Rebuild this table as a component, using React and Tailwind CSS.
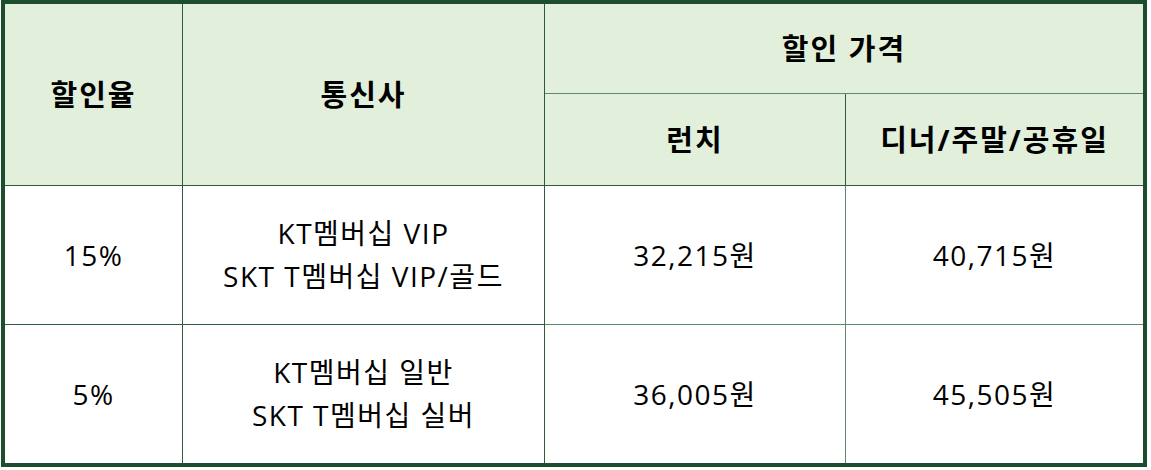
export default function App() {
  const head = "flex items-center justify-center bg-[#e2efda] font-bold text-[29px] tracking-[2px] text-black";
  const cell = "flex flex-col items-center justify-center bg-white text-[28px] leading-[43px] tracking-[1.5px] text-black";

  return (
    <div className="bg-white h-[470px] w-[1151px] pt-0">
      <div
        className="ml-px w-[1146px] border-4 border-[#1b4d2e]"
        style={{ fontFamily: '"Open Sans", "Noto Sans CJK KR", sans-serif' }}
      >
        <div className="grid grid-cols-[178px_362px_301px_1fr] grid-rows-[90px_92px_139px_138px]">
          <div className={`${head} row-span-2 border-r border-[#2f5a3c] border-b`}>할인율</div>
          <div className={`${head} row-span-2 border-r border-[#2f5a3c] border-b`}>통신사</div>
          <div className={`${head} col-span-2 border-b border-[#5d8a6c]`}>할인 가격</div>
          <div className={`${head} border-r border-b border-[#2f5a3c]`}>런치</div>
          <div className={`${head} border-b border-[#2f5a3c]`}>디너/주말/공휴일</div>

          <div className={`${cell} border-r border-b border-[#2f5a3c]`}>15%</div>
          <div className={`${cell} border-r border-b border-[#2f5a3c]`}>
            <span>KT멤버십 VIP</span>
            <span>SKT T멤버십 VIP/골드</span>
          </div>
          <div className={`${cell} border-r border-b border-[#5d8a6c]`}>32,215원</div>
          <div className={`${cell} border-b border-[#5d8a6c]`}>40,715원</div>

          <div className={`${cell} border-r border-[#2f5a3c]`}>5%</div>
          <div className={`${cell} border-r border-[#2f5a3c]`}>
            <span>KT멤버십 일반</span>
            <span>SKT T멤버십 실버</span>
          </div>
          <div className={`${cell} border-r border-[#5d8a6c]`}>36,005원</div>
          <div className={cell}>45,505원</div>
        </div>
      </div>
    </div>
  );
}
